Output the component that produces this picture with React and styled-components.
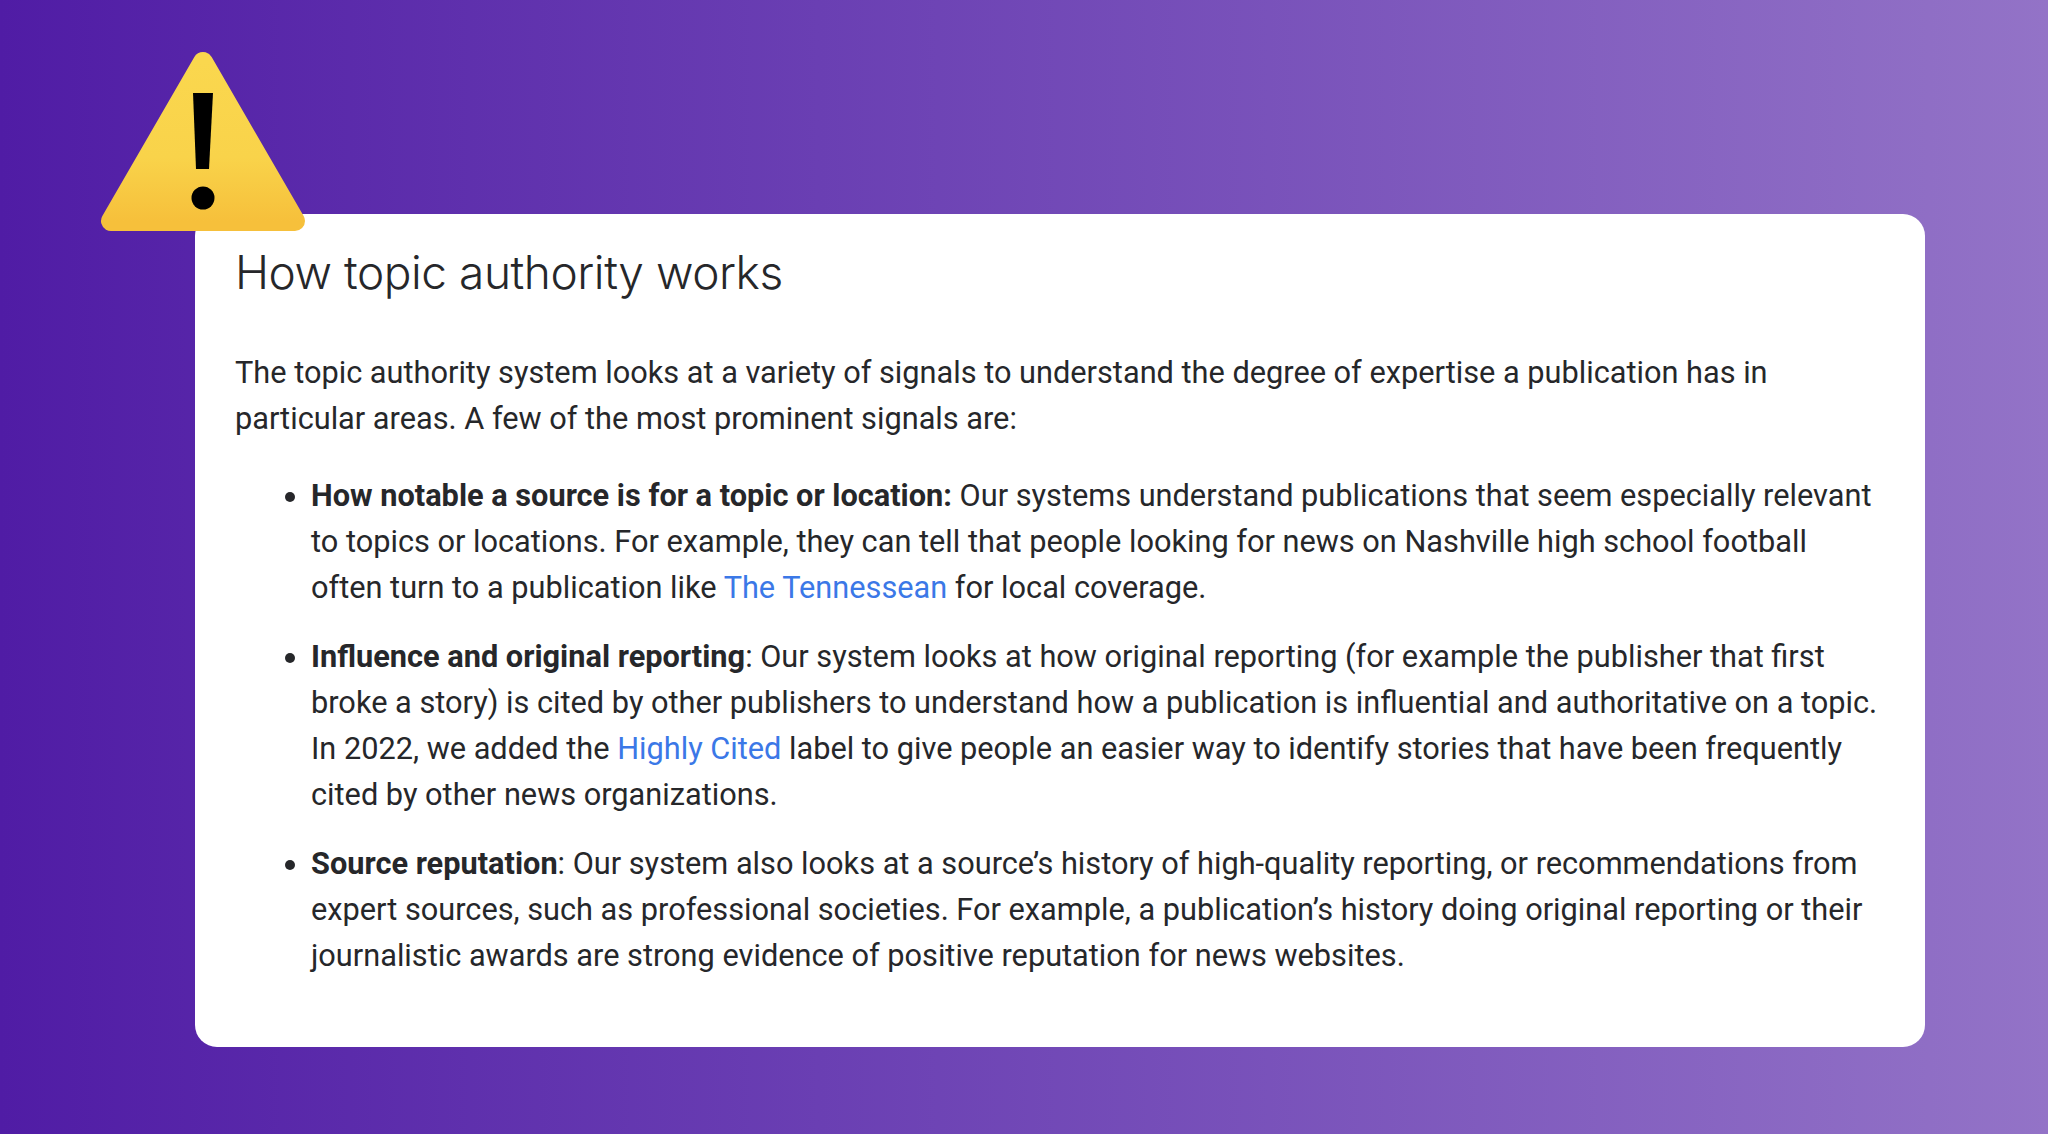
import React from 'react'
import styled, { createGlobalStyle } from 'styled-components'

const GlobalStyle = createGlobalStyle`
  html, body {
    margin: 0;
    padding: 0;
  }
  body {
    font-family: Roboto, "Liberation Sans", sans-serif;
  }
`

const Page = styled.div`
  position: relative;
  box-sizing: border-box;
  width: 2048px;
  height: 1134px;
  overflow: hidden;
  padding: 214px 123px 87px 195px;
  background: linear-gradient(90deg, #501ca5 0%, #6a3fb3 40%, #9373c7 100%);
`

const Card = styled.main`
  box-sizing: border-box;
  height: 833px;
  padding: 28px 40px 0 40px;
  background: #fff;
  border-radius: 22px;
  color: #26272a;
`

const Title = styled.h1`
  margin: 0 0 48px;
  font-family: Inter, Roboto, sans-serif;
  font-size: 46px;
  line-height: 60px;
  font-weight: 300;
  letter-spacing: -0.45px;
  color: #26272a;
`

const Paragraph = styled.p`
  margin: 0 0 31px;
  font-size: 30.72px;
  line-height: 46px;
`

const List = styled.ul`
  margin: 0;
  padding: 0 0 0 76px;
`

const Item = styled.li`
  margin: 0 0 23px;
  font-size: 30.72px;
  line-height: 46px;
`

const Link = styled.a`
  color: #3b78e7;
  text-decoration: none;
`

const WarningIcon = styled.svg`
  position: absolute;
  left: 100px;
  top: 50px;
  width: 206px;
  height: 183px;
`

function Warning() {
  return (
    <WarningIcon viewBox="0 0 206 183">
      <defs>
        <linearGradient id="warn" x1="0" y1="0" x2="0" y2="1">
          <stop offset="0" stopColor="#fad74e" />
          <stop offset="0.6" stopColor="#f9d34a" />
          <stop offset="1" stopColor="#f6c03b" />
        </linearGradient>
      </defs>
      <path
        d="M103 12 L11 171 L195 171 Z"
        fill="url(#warn)"
        stroke="url(#warn)"
        strokeWidth="20"
        strokeLinejoin="round"
      />
      <path d="M93 43 H113 L109 119 H96 Z" fill="#000" />
      <circle cx="103" cy="148" r="11.5" fill="#000" />
    </WarningIcon>
  )
}

export default function App() {
  return (
    <Page>
      <GlobalStyle />
      <Card>
        <Title>How topic authority works</Title>
        <Paragraph>
          The topic authority system looks at a variety of signals to understand the degree of expertise a publication has in particular areas. A few of the most prominent signals are:
        </Paragraph>
        <List>
          <Item>
            <b>How notable a source is for a topic or location:</b> Our systems understand publications that seem especially relevant to topics or locations. For example, they can tell that people looking for news on Nashville high school football often turn to a publication like <Link href="#">The Tennessean</Link> for local coverage.
          </Item>
          <Item>
            <b>Influence and original reporting</b>: Our system looks at how original reporting (for example the publisher that first broke a story) is cited by other publishers to understand how a publication is influential and authoritative on a topic. In 2022, we added the <Link href="#">Highly Cited</Link> label to give people an easier way to identify stories that have been frequently cited by other news organizations.
          </Item>
          <Item>
            <b>Source reputation</b>: Our system also looks at a source’s history of high-quality reporting, or recommendations from expert sources, such as professional societies. For example, a publication’s history doing original reporting or their journalistic awards are strong evidence of positive reputation for news websites.
          </Item>
        </List>
      </Card>
      <Warning />
    </Page>
  )
}
